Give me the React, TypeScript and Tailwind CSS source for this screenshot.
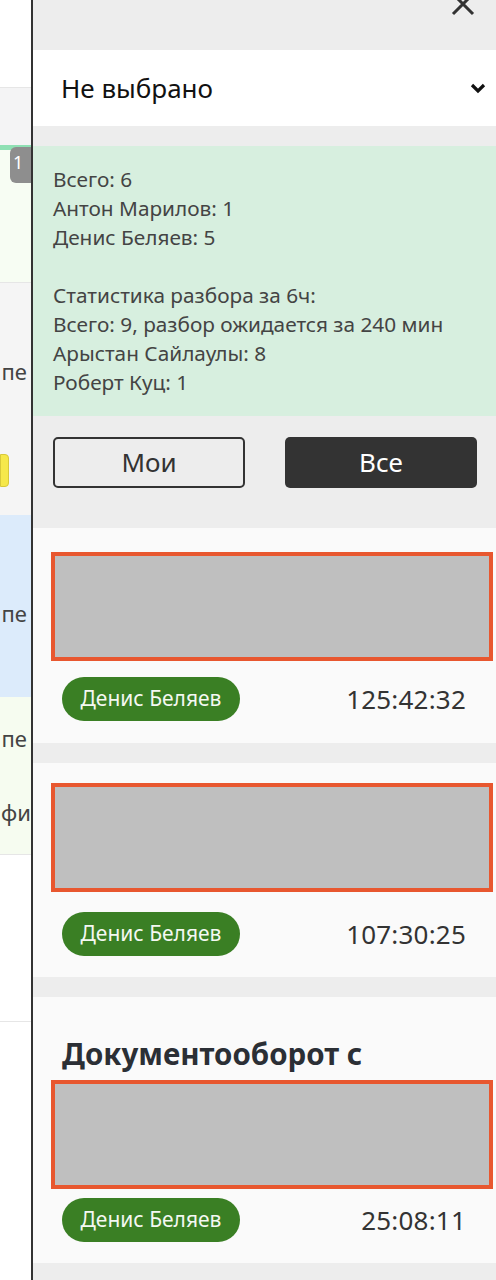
import React from "react";

const font = { fontFamily: '"Noto Sans", "Open Sans", sans-serif' };

function Card({
  title,
  time,
  pt,
  gap,
  pb,
}: {
  title?: string;
  time: string;
  pt: string;
  gap: string;
  pb: string;
}) {
  return (
    <div className={`bg-[#fafafa] flex flex-col shrink-0 ${pt} ${pb}`}>
      {title && (
        <div className="pl-[29px] text-[29.5px] leading-[36px] font-bold text-[#2b2f35] mb-[8px] whitespace-nowrap">
          {title}
        </div>
      )}
      <div className="ml-[18px] mr-[3px] h-[109px] border-[4px] border-[#e8572f] bg-[#bfbfbf]" />
      <div className={`flex items-center justify-between pl-[29px] pr-[30px] ${gap}`}>
        <div className="h-[44px] w-[178px] rounded-full bg-[#3a7f24] text-[#f4f8f2] text-[21px] flex items-center justify-center whitespace-nowrap">
          Денис Беляев
        </div>
        <div className="text-[26px] text-[#333] tracking-[0.2px]">{time}</div>
      </div>
    </div>
  );
}

export default function App() {
  return (
    <div className="flex w-[496px] h-[1280px] overflow-hidden bg-white" style={font}>
      {/* background page strip */}
      <div className="w-[31px] shrink-0 flex flex-col overflow-hidden text-[#444] text-[22px]">
        <div className="h-[88px] bg-white border-b border-[#e6e6e6] shrink-0" />
        <div className="h-[57px] bg-[#f4f4f5] shrink-0" />
        <div className="relative h-[138px] shrink-0 bg-[#f7fdf3] border-t-[5px] border-[#8fe0b4] border-b border-b-[#e6e6e6]">
          <div className="absolute left-[10px] -top-[3px] w-[30px] h-[36px] rounded-[6px] bg-[#8e8e8e] text-white text-[18px] flex items-start pl-[3px] pt-[2px]">
            1
          </div>
        </div>
        <div className="h-[232px] shrink-0 bg-[#f5f5f5] flex flex-col">
          <div className="mt-[74px] leading-[28px] flex justify-end pr-[4px]">
            <span className="whitespace-nowrap">пе</span>
          </div>
          <div className="mt-[69px] w-[9px] h-[33px] bg-[#f6e84a] border border-[#d8c93a] rounded-r-[4px]" />
        </div>
        <div className="h-[182px] shrink-0 bg-[#dcebfb] flex flex-col">
          <div className="mt-[84px] leading-[28px] flex justify-end pr-[4px]">
            <span className="whitespace-nowrap">пе</span>
          </div>
        </div>
        <div className="h-[158px] shrink-0 bg-[#f6fcf0] border-b border-[#e6e6e6] flex flex-col">
          <div className="mt-[27px] leading-[28px] flex justify-end pr-[4px]">
            <span className="whitespace-nowrap">пе</span>
          </div>
          <div className="mt-[46px] leading-[28px] pl-[1px]">
            <span className="whitespace-nowrap">фи</span>
          </div>
        </div>
        <div className="h-[167px] shrink-0 bg-white border-b border-[#e6e6e6]" />
        <div className="flex-1 bg-white" />
      </div>
      <div className="w-[2px] shrink-0 bg-[#333]" />
      {/* drawer panel */}
      <div className="flex-1 bg-[#ededed] flex flex-col">
        <div className="h-[50px] shrink-0 flex justify-end pr-[20px]">
          <svg width="26" height="26" viewBox="0 0 26 26" className="-mt-[9px]">
            <path d="M3 3 L23 23 M23 3 L3 23" stroke="#333" strokeWidth="3" strokeLinecap="butt" />
          </svg>
        </div>
        <div className="h-[76px] shrink-0 bg-white flex items-center justify-between pl-[28px] pr-[10px]">
          <span className="text-[26px] text-[#111]">Не выбрано</span>
          <svg width="16" height="12" viewBox="0 0 16 12">
            <path d="M2 3 L8 9 L14 3" stroke="#111" strokeWidth="3.2" fill="none" />
          </svg>
        </div>
        <div className="h-[20px] shrink-0" />
        <div className="h-[270px] shrink-0 bg-[#d7efdf] pl-[20px] pt-[19px] text-[20.8px] leading-[29px] text-[#444]">
          <div>Всего: 6</div>
          <div>Антон Марилов: 1</div>
          <div>Денис Беляев: 5</div>
          <div className="h-[29px]" />
          <div>Статистика разбора за 6ч:</div>
          <div className="whitespace-nowrap">Всего: 9, разбор ожидается за 240 мин</div>
          <div>Арыстан Сайлаулы: 8</div>
          <div>Роберт Куц: 1</div>
        </div>
        <div className="h-[112px] shrink-0 grid grid-cols-2 gap-[40px] pl-[20px] pr-[19px] pt-[21px]">
          <div className="h-[51px] border-2 border-[#333] rounded-[5px] flex items-center justify-center text-[26px] text-[#333]">
            Мои
          </div>
          <div className="h-[51px] bg-[#333] rounded-[5px] flex items-center justify-center text-[26px] text-white">
            Все
          </div>
        </div>
        <Card time="125:42:32" pt="pt-[24px]" gap="mt-[16px]" pb="pb-[22px]" />
        <div className="h-[20px] shrink-0" />
        <Card time="107:30:25" pt="pt-[20px]" gap="mt-[20px]" pb="pb-[21px]" />
        <div className="h-[20px] shrink-0" />
        <Card title="Документооборот с" time="25:08:11" pt="pt-[39px]" gap="mt-[9px]" pb="pb-[21px]" />
        <div className="flex-1" />
      </div>
    </div>
  );
}
